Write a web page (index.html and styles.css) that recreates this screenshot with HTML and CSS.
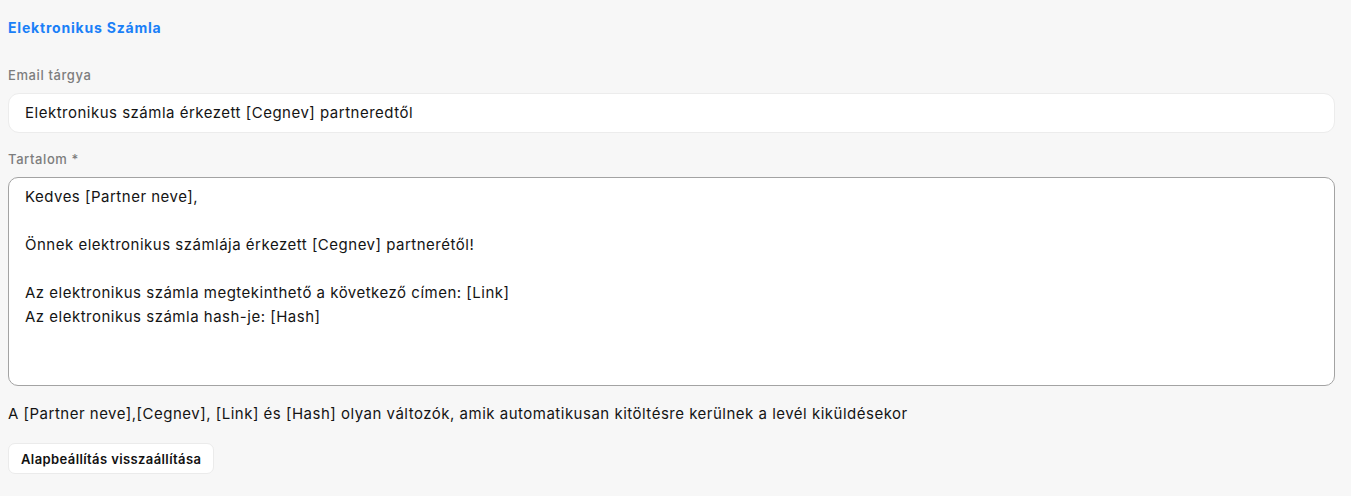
FILE: index.html
```html
<!DOCTYPE html>
<html lang="hu">
<head>
<meta charset="utf-8">
<link rel="stylesheet" href="styles.css">
</head>
<body>
<div class="page">
  <h2 class="title">Elektronikus Számla</h2>
  <div class="field">
    <label class="label">Email tárgya</label>
    <div class="input">Elektronikus számla érkezett [Cegnev] partneredtől</div>
  </div>
  <div class="field">
    <label class="label">Tartalom *</label>
    <div class="textarea">
      <div class="line">Kedves [Partner neve],</div>
      <div class="line">&nbsp;</div>
      <div class="line">Önnek elektronikus számlája érkezett [Cegnev] partnerétől!</div>
      <div class="line">&nbsp;</div>
      <div class="line">Az elektronikus számla megtekinthető a következő címen: [Link]</div>
      <div class="line">Az elektronikus számla hash-je: [Hash]</div>
    </div>
  </div>
  <p class="help">A [Partner neve],[Cegnev], [Link] és [Hash] olyan változók, amik automatikusan kitöltésre kerülnek a levél kiküldésekor</p>
  <button class="btn">Alapbeállítás visszaállítása</button>
</div>
</body>
</html>
```

FILE: styles.css
```css
html, body {
  margin: 0;
  padding: 0;
  background: #f7f7f7;
}
body {
  font-family: Inter, "Noto Sans", sans-serif;
  color: #141414;
}
.page {
  padding: 18px 16px 0 8px;
  display: flex;
  flex-direction: column;
}
.title {
  margin: 0;
  font-size: 14px;
  font-weight: 700;
  color: #1a80f7;
  line-height: 20px;
  letter-spacing: 0.8px;
}
.field {
  display: flex;
  flex-direction: column;
}
.label {
  font-size: 13px;
  font-weight: 500;
  color: #7d7d7d;
  line-height: 18px;
  letter-spacing: 0.6px;
  margin-top: 28px;
  margin-bottom: 9px;
}
.field + .field .label {
  margin-top: 17px;
}
.input {
  background: #fff;
  border: 1px solid #ececec;
  border-radius: 11px;
  height: 40px;
  box-sizing: border-box;
  line-height: 38px;
  padding: 0 16px;
  font-size: 15px;
  letter-spacing: 0.5px;
}
.textarea {
  background: #fff;
  border: 1px solid #a3a3a3;
  border-radius: 10px;
  padding: 7px 16px;
  font-size: 15px;
  line-height: 24px;
  letter-spacing: 0.5px;
  box-sizing: border-box;
  height: 209px;
}
.help {
  margin: 18px 0 0;
  font-size: 15px;
  line-height: 20px;
  letter-spacing: 0.5px;
}
.btn {
  align-self: flex-start;
  margin-top: 19px;
  background: #fff;
  border: 1px solid #ebebeb;
  border-radius: 7px;
  height: 31px;
  padding: 0 12px;
  font-family: inherit;
  font-size: 13px;
  font-weight: 600;
  letter-spacing: 0.4px;
  color: #111;
}
```
